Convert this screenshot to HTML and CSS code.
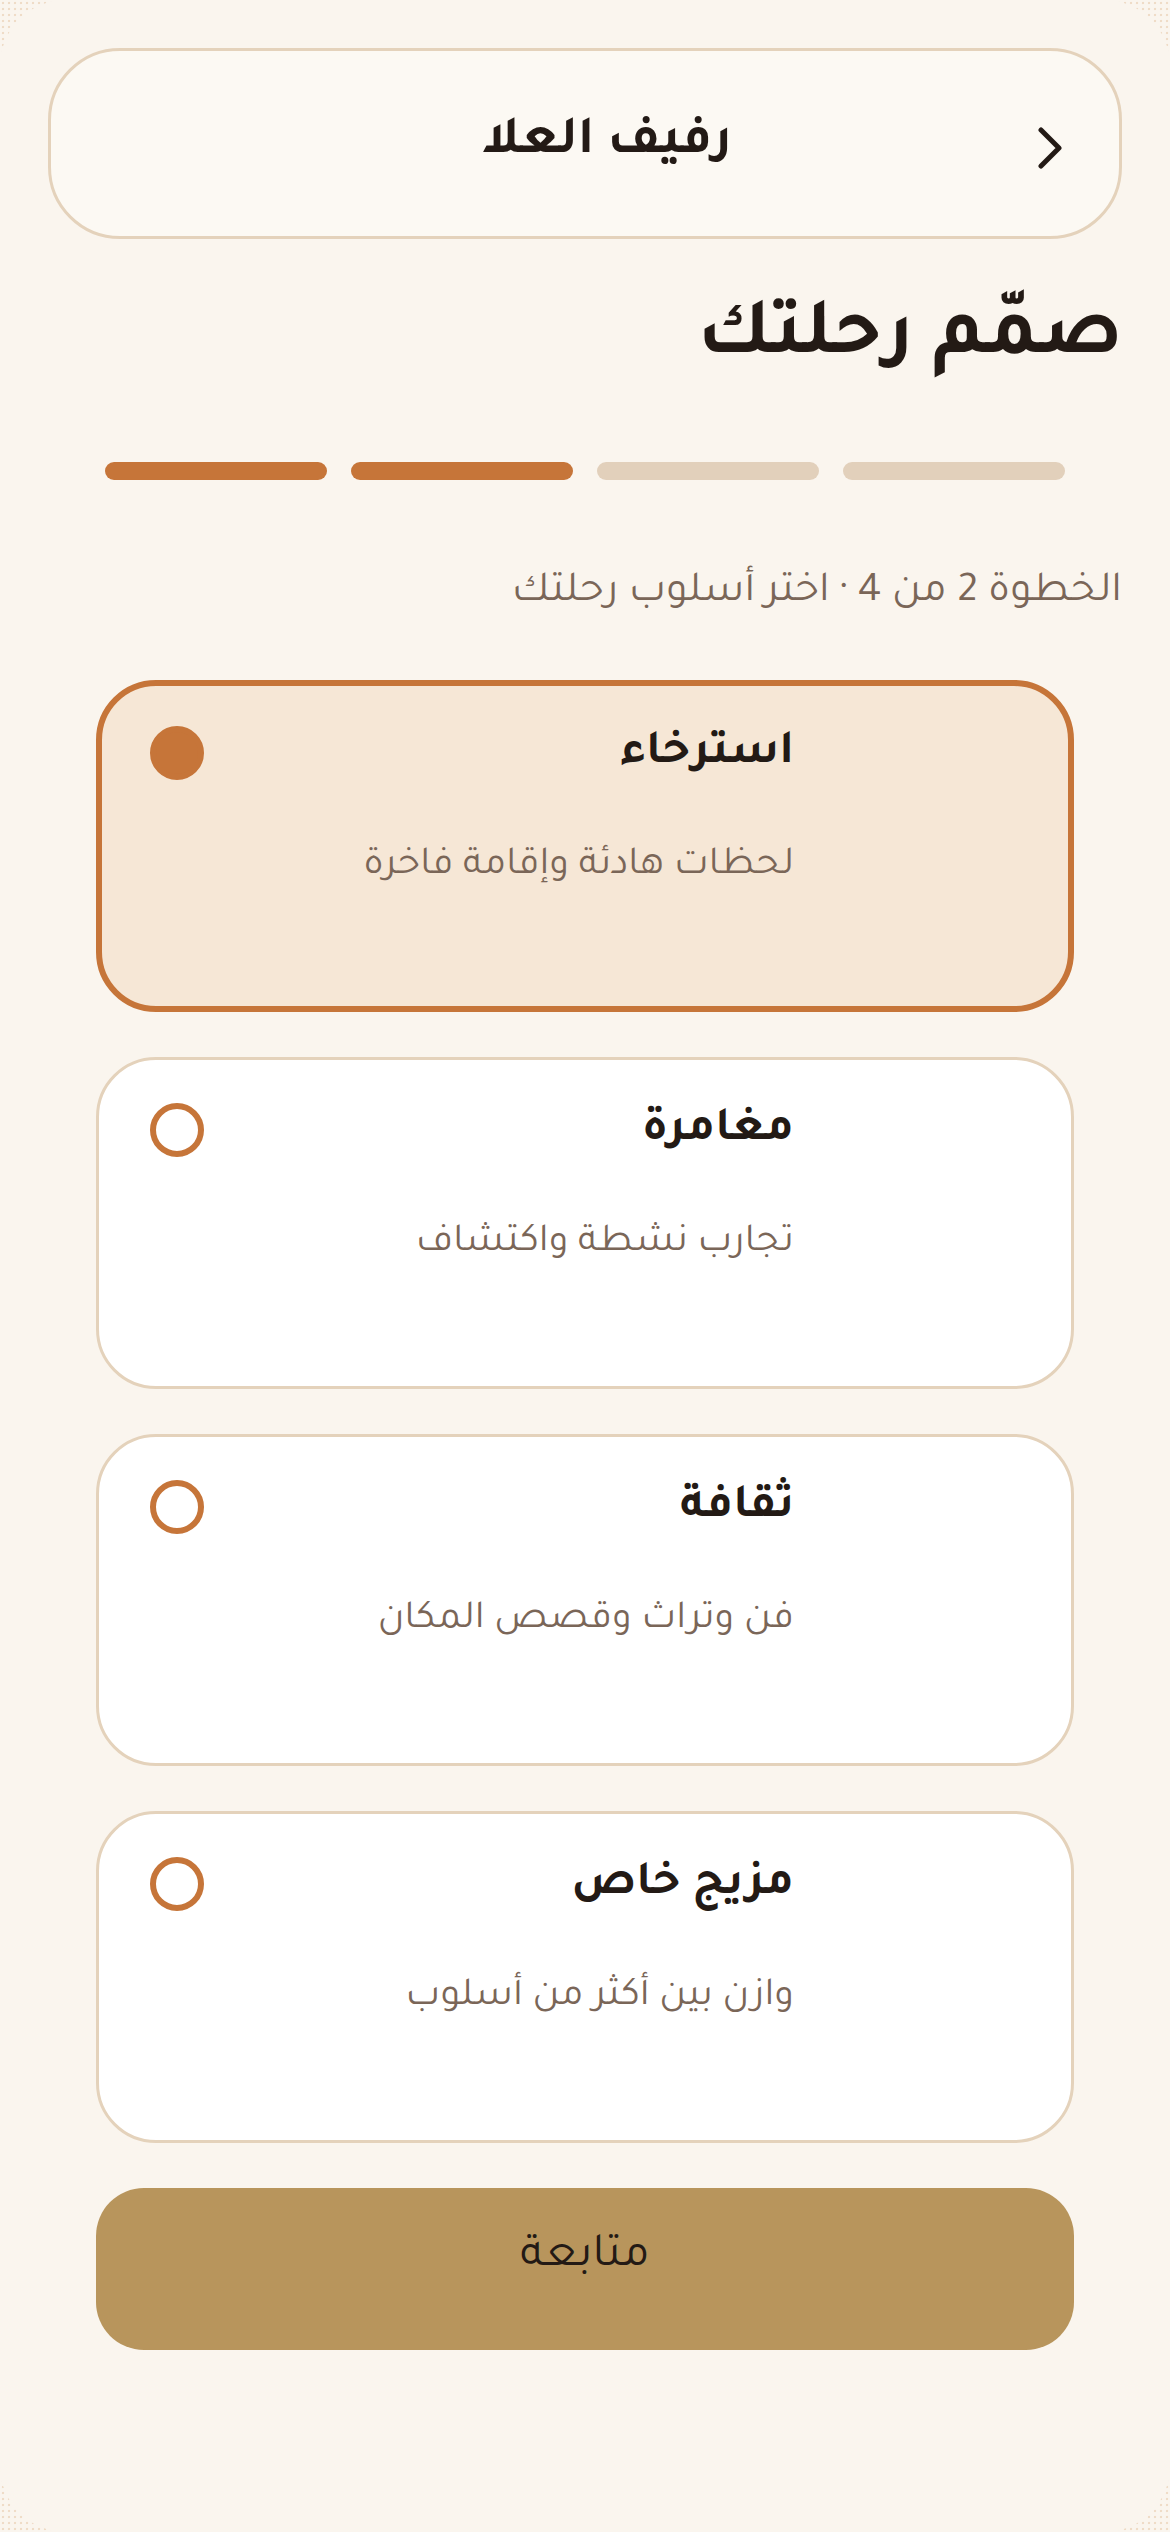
FILE: index.html
```html
<!DOCTYPE html>
<html lang="ar" dir="rtl">
<head>
<meta charset="utf-8">
<title>صمّم رحلتك</title>
<link rel="stylesheet" href="styles.css">
</head>
<body>
<div class="app">
  <header class="topbar">
    <span class="back">
      <svg viewBox="0 0 24 42" width="24" height="42"><path d="M3 3 L21 21 L3 39" fill="none" stroke="#231a15" stroke-width="5" stroke-linecap="round" stroke-linejoin="round"/></svg>
    </span>
    <h2 class="brand">رفيف العلا</h2>
    <span class="spacer"></span>
  </header>

  <h1 class="page-title">صمّم رحلتك</h1>

  <div class="progress">
    <span class="bar bar-on"></span>
    <span class="bar bar-on"></span>
    <span class="bar"></span>
    <span class="bar"></span>
  </div>

  <p class="step">الخطوة 2 من 4 · اختر أسلوب رحلتك</p>

  <div class="options">
    <div class="option option-selected">
      <div class="option-text">
        <h3 class="option-title">استرخاء</h3>
        <p class="option-desc">لحظات هادئة وإقامة فاخرة</p>
      </div>
      <span class="radio radio-on"></span>
    </div>
    <div class="option">
      <div class="option-text">
        <h3 class="option-title">مغامرة</h3>
        <p class="option-desc">تجارب نشطة واكتشاف</p>
      </div>
      <span class="radio"></span>
    </div>
    <div class="option">
      <div class="option-text">
        <h3 class="option-title">ثقافة</h3>
        <p class="option-desc">فن وتراث وقصص المكان</p>
      </div>
      <span class="radio"></span>
    </div>
    <div class="option">
      <div class="option-text">
        <h3 class="option-title">مزيج خاص</h3>
        <p class="option-desc">وازن بين أكثر من أسلوب</p>
      </div>
      <span class="radio"></span>
    </div>
  </div>

  <button class="continue">متابعة</button>
</div>
</body>
</html>
```

FILE: styles.css
```css
* { box-sizing: border-box; }

html, body {
  margin: 0;
  padding: 0;
}

body {
  background-color: #faf5ee;
  background-image: radial-gradient(circle, #efdcc7 1.2px, transparent 1.6px);
  background-size: 6px 6px;
  font-family: "Tajawal", "Noto Sans Arabic", sans-serif;
  color: #231a15;
}

.app {
  min-height: 2532px;
  background: #faf5ee;
  border-radius: 66px;
  padding: 48px 48px 0;
  display: flex;
  flex-direction: column;
}

.topbar {
  height: 191px;
  border: 3px solid #e4d2bb;
  border-radius: 72px;
  background: #fcf9f3;
  display: grid;
  grid-template-columns: 24px 1fr 24px;
  align-items: center;
  padding: 0 57px;
}

.back {
  display: flex;
  align-items: center;
  justify-content: center;
  margin-top: 8px;
}

.brand {
  margin: 0;
  text-align: center;
  font-size: 54px;
  font-weight: 700;
  line-height: 60px;
  padding-left: 44px;
}

.page-title {
  margin: 52px 0 0;
  font-size: 81px;
  line-height: 100px;
  font-weight: 700;
  text-align: right;
}

.progress {
  direction: ltr;
  margin: 71px 57px 0;
  display: grid;
  grid-template-columns: repeat(4, 1fr);
  gap: 24px;
}

.bar {
  height: 18px;
  border-radius: 9px;
  background: #e2d0bb;
}

.bar-on {
  background: #c67539;
}

.step {
  margin: 89px 0 0;
  font-size: 43px;
  line-height: 50px;
  color: #7a6658;
  text-align: right;
}

.options {
  margin: 61px 48px 0;
  display: flex;
  flex-direction: column;
  gap: 45px;
}

.option {
  height: 332px;
  border: 3px solid #e4d2bb;
  border-radius: 60px;
  background: #ffffff;
  display: flex;
  align-items: flex-start;
  justify-content: space-between;
  padding: 44px 277px 0 51px;
}

.option-selected {
  border: 6px solid #c67539;
  background: #f6e7d6;
  padding: 41px 274px 0 48px;
}

.option-text {
  text-align: right;
}

.option-title {
  margin: 0;
  font-size: 48px;
  line-height: 56px;
  font-weight: 700;
  color: #231a15;
}

.option-desc {
  margin: 59px 0 0;
  font-size: 40px;
  line-height: 50px;
  color: #7a6658;
}

.radio {
  width: 54px;
  height: 54px;
  border-radius: 50%;
  border: 6px solid #c67539;
  margin-top: -1px;
  flex: none;
}

.radio-on {
  background: #c67539;
}

.continue {
  margin: 45px 48px 0;
  height: 162px;
  border: none;
  border-radius: 48px;
  background: #b8955c;
  font-family: "Tajawal", sans-serif;
  font-size: 48px;
  line-height: 56px;
  color: #231a15;
  display: block;
  padding: 0 0 22px;
  text-align: center;
}
```
